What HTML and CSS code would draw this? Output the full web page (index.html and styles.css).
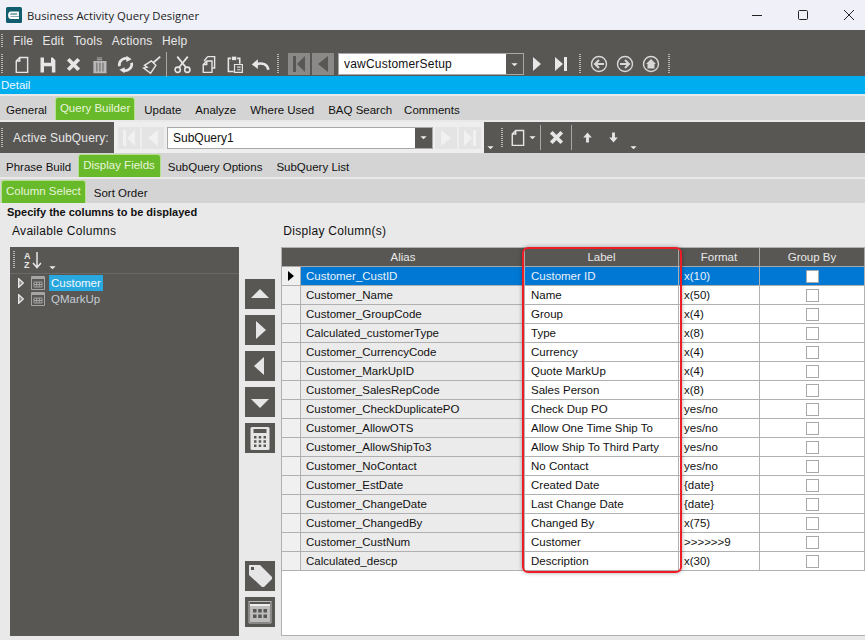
FILE: index.html
```html
<!DOCTYPE html>
<html>
<head>
  <meta charset="UTF-8">
  <title>Business Activity Query Designer</title>
  <link rel="stylesheet" href="styles.css">
</head>
<body>
  <svg class="defs" width="0" height="0">
    <symbol id="i-new" viewBox="0 0 24 24"><path d="M10 4h9v17H6V8z M10 4v4H6" fill="none" stroke="currentColor" stroke-width="1.600"/></symbol>
    <symbol id="i-x" viewBox="0 0 24 24"><path d="M6 6l12 12M18 6L6 18" fill="none" stroke="currentColor" stroke-width="4.400"/></symbol>
    <symbol id="i-table" viewBox="0 0 14 14"><path d="M.5.5h13v13H.5z" fill="none" stroke="currentColor"/><path d="M1 1h12v2H1z" fill="currentColor"/><path d="M3 6h8v5H3z M3 8.500h8M5.700 6v5M8.300 6v5" fill="none" stroke="currentColor"/></symbol>
    <symbol id="i-drop" viewBox="0 0 8 5"><path d="M.5 1h7L4 4.500z" fill="currentColor"/></symbol>
  </svg>

  <div class="titlebar">
    <svg class="logo" viewBox="0 0 16 16"><rect width="16" height="16" rx="1.500" fill="#0f5d6e"/><path d="M4 8.500h8V5.500H5C3.500 5.500 3 6.500 3 8s.5 3 2 3h8" fill="none" stroke="#fff" stroke-width="1.800"/></svg>
    <span class="title">Business Activity Query Designer</span>
    <div class="winctl">
      <svg viewBox="0 0 12 12"><path d="M1 6.500h10" stroke="#222" fill="none"/></svg>
      <svg viewBox="0 0 12 12"><rect x="1.500" y="1.500" width="9" height="9" rx="1" stroke="#222" fill="none"/></svg>
      <svg viewBox="0 0 12 12"><path d="M1 1l10 10M11 1L1 11" stroke="#222" fill="none"/></svg>
    </div>
  </div>

  <div class="darkbar">
    <div class="menu">
      <span class="grip"></span>
      <a>File</a><a>Edit</a><a>Tools</a><a>Actions</a><a>Help</a>
    </div>
    <div class="tools">
      <span class="grip tall"></span>
      <span class="ico"><svg><use href="#i-new"/></svg></span>
      <span class="ico"><svg viewBox="0 0 24 24"><path d="M4 4h14l3 3v14H4z M8 4v6h8V4 M8 14h9v7H8z" fill="#e6e6e6" fill-rule="evenodd"/></svg></span>
      <span class="ico"><svg><use href="#i-x"/></svg></span>
      <span class="ico dim"><svg viewBox="0 0 24 24"><path d="M9 4h6v3H9z M5 8h15v14H5z" fill="currentColor"/><path d="M9 10v10M12.500 10v10M16 10v10M7 5.500h11" stroke="#595754" fill="none"/></svg></span>
      <span class="ico"><svg viewBox="0 0 24 24"><path d="M5 14a7.500 7.500 0 0 1 10-8.500M19 10a7.500 7.500 0 0 1-10 8.500" fill="none" stroke="currentColor" stroke-width="3"/><path d="M13 2l6 4-6 3z M11 22l-6-4 6-3z" fill="currentColor"/></svg></span>
      <span class="ico"><svg viewBox="0 0 24 24"><path d="M22 3l-8 7" stroke="currentColor" stroke-width="2" fill="none"/><path d="M12 8l5 5-6 9-8-6 4-1-3-2z" fill="none" stroke="currentColor" stroke-width="1.600"/></svg></span>
      <span class="sep"></span>
      <span class="ico"><svg viewBox="0 0 24 24"><circle cx="6.500" cy="18" r="3" fill="none" stroke="currentColor" stroke-width="1.800"/><circle cx="17.500" cy="18" r="3" fill="none" stroke="currentColor" stroke-width="1.800"/><path d="M8 15.500L18 3M16 15.500L6 3" stroke="currentColor" stroke-width="2" fill="none"/></svg></span>
      <span class="ico"><svg viewBox="0 0 24 24"><path d="M11 3h8v13h-3 M11 3L7 8" fill="none" stroke="currentColor" stroke-width="1.600"/><path d="M10 8h6v13H6V12z M10 8v4H6" fill="none" stroke="currentColor" stroke-width="1.600"/></svg></span>
      <span class="ico"><svg viewBox="0 0 24 24"><path d="M11 20H5V5h3M15 5h3v6" fill="none" stroke="currentColor" stroke-width="1.800"/><path d="M9 3h5v4H9z" fill="currentColor"/><path d="M12 12h9v9h-9z M15 15h4M15 18h4" fill="none" stroke="currentColor" stroke-width="1.400"/></svg></span>
      <span class="ico"><svg viewBox="0 0 24 24"><path d="M21 18c-1-6-7-9-14-6" fill="none" stroke="currentColor" stroke-width="3"/><path d="M9 6v11L2 12z" fill="currentColor"/></svg></span>
      <span class="grip tall gap-l"></span>
      <span class="navbtn off"><svg viewBox="0 0 22 22"><path d="M5 3h3v16H5z M17 3v16L9 11z" fill="currentColor"/></svg></span>
      <span class="navbtn off"><svg viewBox="0 0 22 22"><path d="M16 3v16L6 11z" fill="currentColor"/></svg></span>
      <div class="combo main">
        <span class="val">vawCustomerSetup</span>
        <span class="dropbtn"><svg><use href="#i-drop"/></svg></span>
      </div>
      <span class="navbtn"><svg viewBox="0 0 22 22"><path d="M7 4v14l8-7z" fill="currentColor"/></svg></span>
      <span class="navbtn"><svg viewBox="0 0 22 22"><path d="M5 4v14l8-7z M14 4h3v14h-3z" fill="currentColor"/></svg></span>
      <span class="grip tall gap-m"></span>
      <span class="ico rnd"><svg viewBox="0 0 24 24"><circle cx="12" cy="12" r="7.500" fill="none" stroke="currentColor" stroke-width="1.400"/><path d="M17 12H9M12 8l-4 4 4 4" fill="none" stroke="currentColor" stroke-width="2"/></svg></span>
      <span class="ico rnd"><svg viewBox="0 0 24 24"><circle cx="12" cy="12" r="7.500" fill="none" stroke="currentColor" stroke-width="1.400"/><path d="M7 12h8M12 8l4 4-4 4" fill="none" stroke="currentColor" stroke-width="2"/></svg></span>
      <span class="ico rnd"><svg viewBox="0 0 24 24"><circle cx="12" cy="12" r="7.500" fill="none" stroke="currentColor" stroke-width="1.400"/><path d="M12 7l-5 5h1.500v4.500h7V12H17z" fill="currentColor"/></svg></span>
      <span class="grip tall gap-e"></span>
    </div>
  </div>

  <div class="detail">Detail</div>

  <div class="tabs top">
    <a>General</a><a class="on">Query Builder</a><a>Update</a><a>Analyze</a><a>Where Used</a><a class="tight">BAQ Search</a><a>Comments</a>
  </div>

  <div class="subbar">
    <div class="sub-left"><span class="grip tall"></span><span>Active SubQuery:</span></div>
    <div class="sub-nav">
      <span class="navbtn pale"><svg viewBox="0 0 22 22"><path d="M5 3h3v16H5z M17 3v16L9 11z" fill="currentColor"/></svg></span>
      <span class="navbtn pale"><svg viewBox="0 0 22 22"><path d="M16 3v16L6 11z" fill="currentColor"/></svg></span>
      <div class="combo sub">
        <span class="val">SubQuery1</span>
        <span class="dropbtn"><svg><use href="#i-drop"/></svg></span>
      </div>
      <span class="navbtn pale"><svg viewBox="0 0 22 22"><path d="M6 3v16l10-8z" fill="currentColor"/></svg></span>
      <span class="navbtn pale"><svg viewBox="0 0 22 22"><path d="M5 3v16l8-8z M14 3h3v16h-3z" fill="currentColor"/></svg></span>
    </div>
    <div class="sub-tools">
      <svg class="chev"><use href="#i-drop"/></svg>
      <span class="grip tall"></span>
      <span class="ico narrow"><svg><use href="#i-new"/></svg></span>
      <svg class="chev mid"><use href="#i-drop"/></svg>
      <span class="sep"></span>
      <span class="ico"><svg><use href="#i-x"/></svg></span>
      <span class="sep"></span>
      <span class="ico small"><svg viewBox="0 0 24 24"><path d="M12 5l6 7h-4v7h-4v-7H6z" fill="currentColor"/></svg></span>
      <span class="ico small"><svg viewBox="0 0 24 24"><path d="M12 19l6-7h-4V5h-4v7H6z" fill="currentColor"/></svg></span>
      <svg class="chev end"><use href="#i-drop"/></svg>
    </div>
  </div>

  <div class="tabs second">
    <a>Phrase Build</a><a class="on">Display Fields</a><a>SubQuery Options</a><a>SubQuery List</a>
  </div>

  <div class="tabs third">
    <a class="on">Column Select</a><a>Sort Order</a>
  </div>

  <div class="content">
    <div class="hint">Specify the columns to be displayed</div>
    <div class="captions">
      <span class="cap-left">Available Columns</span>
      <span class="cap-right">Display Column(s)</span>
    </div>
    <div class="panes">
      <div class="treepane">
        <div class="tree-tools">
          <span class="grip"></span>
          <svg class="az" viewBox="0 0 20 18"><text x="0" y="8" class="az-t">A</text><text x="0" y="17" class="az-t">Z</text><path d="M13 1v15M9 12l4 4.500 4-4.500" fill="none" stroke="currentColor" stroke-width="1.500"/></svg>
          <svg class="chev"><use href="#i-drop"/></svg>
        </div>
        <div class="tree">
          <div class="node">
            <svg class="tw" viewBox="0 0 6 10"><path d="M.7.800L5.300 5 .7 9.200z" fill="#8a8987" stroke="#e6e6e6" stroke-width="1.400"/></svg>
            <svg class="tbl"><use href="#i-table"/></svg>
            <span class="nm sel">Customer</span>
          </div>
          <div class="node">
            <svg class="tw" viewBox="0 0 6 10"><path d="M.7.800L5.300 5 .7 9.200z" fill="#8a8987" stroke="#e6e6e6" stroke-width="1.400"/></svg>
            <svg class="tbl"><use href="#i-table"/></svg>
            <span class="nm">QMarkUp</span>
          </div>
        </div>
      </div>

      <div class="movers">
        <span class="mv"><svg viewBox="0 0 30 30"><path d="M15 10l9 9H6z" fill="currentColor"/></svg></span>
        <span class="mv"><svg viewBox="0 0 30 30"><path d="M11 6l10 9-10 9z" fill="currentColor"/></svg></span>
        <span class="mv"><svg viewBox="0 0 30 30"><path d="M19 6L9 15l10 9z" fill="currentColor"/></svg></span>
        <span class="mv"><svg viewBox="0 0 30 30"><path d="M15 21l9-9H6z" fill="currentColor"/></svg></span>
        <span class="mv"><svg viewBox="0 0 30 30"><path d="M7 4h16a1.500 1.500 0 0 1 1.500 1.500v20A1.500 1.500 0 0 1 23 27H7a1.500 1.500 0 0 1-1.500-1.500v-20A1.500 1.500 0 0 1 7 4z" fill="currentColor"/><path d="M8.500 6h13v4h-13z" fill="#595754"/><path d="M9 13h2.500v2.500H9z M13.700 13h2.500v2.500h-2.500z M18.500 13H21v2.500h-2.500z M9 17.300h2.500v2.500H9z M13.700 17.300h2.500v2.500h-2.500z M18.500 17.300H21v2.500h-2.500z M9 21.600h2.500v2.500H9z M13.700 21.600h2.500v2.500h-2.500z M18.500 21.600H21v2.500h-2.500z" fill="#595754"/></svg></span>
        <span class="spacer"></span>
        <span class="mv"><svg viewBox="0 0 30 30"><path d="M4 4h11l12 12v2l-8 8h-2L4 14z" fill="currentColor"/><path d="M6 6h3v3H6z" fill="#595754"/></svg></span>
        <span class="mv"><svg viewBox="0 0 30 30"><path d="M4 4.500h22M4 4v22h22V4" fill="none" stroke="#bbb"/><path d="M5 8h20v17H5z" fill="#bdbdbd"/><path d="M5 7h20v2H5z" fill="#eee"/><path d="M8 12h3.500v3.500H8z M13.200 12h3.500v3.500h-3.500z M18.500 12H22v3.500h-3.500z M8 17.500h3.500V21H8z M13.200 17.500h3.500V21h-3.500z M18.500 17.500H22V21h-3.500z" fill="#595754"/></svg></span>
      </div>

      <div class="gridbox">
        <table class="grid">
          <colgroup><col class="c0"><col class="c1"><col class="c2"><col class="c3"><col class="c4"></colgroup>
          <thead>
            <tr><th colspan="2">Alias</th><th>Label</th><th>Format</th><th>Group By</th></tr>
          </thead>
          <tbody>
            <tr class="cur"><td class="rh"><svg class="rowmark" viewBox="0 0 6 10"><path d="M0 0l6 5-6 5z"/></svg></td><td class="al">Customer_CustID</td><td class="lb">Customer ID</td><td>x(10)</td><td class="ck"><span class="box"></span></td></tr>
            <tr><td class="rh"></td><td class="al">Customer_Name</td><td class="lb">Name</td><td>x(50)</td><td class="ck"><span class="box"></span></td></tr>
            <tr><td class="rh"></td><td class="al">Customer_GroupCode</td><td class="lb">Group</td><td>x(4)</td><td class="ck"><span class="box"></span></td></tr>
            <tr><td class="rh"></td><td class="al">Calculated_customerType</td><td class="lb">Type</td><td>x(8)</td><td class="ck"><span class="box"></span></td></tr>
            <tr><td class="rh"></td><td class="al">Customer_CurrencyCode</td><td class="lb">Currency</td><td>x(4)</td><td class="ck"><span class="box"></span></td></tr>
            <tr><td class="rh"></td><td class="al">Customer_MarkUpID</td><td class="lb">Quote MarkUp</td><td>x(4)</td><td class="ck"><span class="box"></span></td></tr>
            <tr><td class="rh"></td><td class="al">Customer_SalesRepCode</td><td class="lb">Sales Person</td><td>x(8)</td><td class="ck"><span class="box"></span></td></tr>
            <tr><td class="rh"></td><td class="al">Customer_CheckDuplicatePO</td><td class="lb">Check Dup PO</td><td>yes/no</td><td class="ck"><span class="box"></span></td></tr>
            <tr><td class="rh"></td><td class="al">Customer_AllowOTS</td><td class="lb">Allow One Time Ship To</td><td>yes/no</td><td class="ck"><span class="box"></span></td></tr>
            <tr><td class="rh"></td><td class="al">Customer_AllowShipTo3</td><td class="lb">Allow Ship To Third Party</td><td>yes/no</td><td class="ck"><span class="box"></span></td></tr>
            <tr><td class="rh"></td><td class="al">Customer_NoContact</td><td class="lb">No Contact</td><td>yes/no</td><td class="ck"><span class="box"></span></td></tr>
            <tr><td class="rh"></td><td class="al">Customer_EstDate</td><td class="lb">Created Date</td><td>{date}</td><td class="ck"><span class="box"></span></td></tr>
            <tr><td class="rh"></td><td class="al">Customer_ChangeDate</td><td class="lb">Last Change Date</td><td>{date}</td><td class="ck"><span class="box"></span></td></tr>
            <tr><td class="rh"></td><td class="al">Customer_ChangedBy</td><td class="lb">Changed By</td><td>x(75)</td><td class="ck"><span class="box"></span></td></tr>
            <tr><td class="rh"></td><td class="al">Customer_CustNum</td><td class="lb">Customer</td><td>&gt;&gt;&gt;&gt;&gt;&gt;9</td><td class="ck"><span class="box"></span></td></tr>
            <tr><td class="rh"></td><td class="al">Calculated_descp</td><td class="lb">Description</td><td>x(30)</td><td class="ck"><span class="box"></span></td></tr>
          </tbody>
        </table>
        <div class="redbox"></div>
      </div>
    </div>
  </div>
</body>
</html>
```

FILE: styles.css
```css
/* page */
html, body {
  margin: 0;
  padding: 0;
}

body {
  width: 865px;
  height: 640px;
  overflow: hidden;
  background-color: #e9e9e9;
  font-family: "Liberation Sans", Arial, sans-serif;
  font-size: 11.5px;
  color: #111;
}

.defs {
  position: absolute;
}

/* window title */
.titlebar {
  height: 30px;
  display: flex;
  align-items: center;
  background-color: #f0f1f8;
  padding-left: 6px;
}

.logo {
  width: 16px;
  height: 16px;
  margin-right: 5px;
}

.title {
  font-family: "Open Sans", sans-serif;
  font-size: 11.3px;
  color: #222;
}

.winctl {
  margin-left: auto;
  display: flex;
  gap: 34px;
  padding-right: 10px;
}

.winctl svg {
  width: 12px;
  height: 12px;
}

/* menu and main toolbar */
.darkbar {
  height: 46px;
  background-color: #595754;
  color: #e8e8e8;
}

.menu {
  height: 22px;
  display: flex;
  align-items: center;
  font-size: 12px;
  letter-spacing: 0.2px;
  padding-left: 1px;
}

.menu .grip {
  height: 14px;
  margin-right: 10px;
}

.menu a {
  margin-right: 9.4px;
}

.tools {
  height: 24px;
  display: flex;
  align-items: center;
  padding-left: 1px;
}

.grip {
  display: inline-block;
  flex: none;
  width: 2px;
  height: 18px;
  background: repeating-linear-gradient(to bottom, #b5b5b5 0 1px, transparent 1px 2px);
}

.grip.tall {
  height: 20px;
  margin-right: 5px;
}

.grip.gap-l {
  margin-left: 4px;
  margin-right: 9px;
}

.grip.gap-m {
  margin-left: 5px;
  margin-right: 5px;
}

.grip.gap-e {
  margin-left: 4px;
}

.ico {
  flex: none;
  width: 26px;
  height: 24px;
  display: flex;
  align-items: center;
  justify-content: center;
  color: #e6e6e6;
}

.ico svg {
  width: 21px;
  height: 21px;
}

.ico.dim {
  color: #b8b8b8;
}

.ico.rnd {
  color: #d8d8d8;
}

.ico.rnd svg {
  width: 24px;
  height: 24px;
}

.ico.narrow {
  width: 24px;
}

.ico.small svg {
  width: 17px;
  height: 17px;
}

.sep {
  flex: none;
  width: 1px;
  height: 25px;
  background-color: #a8a8a8;
  margin: 0 2px;
}

.navbtn {
  flex: none;
  width: 22px;
  height: 22px;
  margin-right: 2px;
  color: #e8e8e8;
}

.navbtn svg {
  display: block;
  width: 22px;
  height: 22px;
}

.navbtn.off {
  background-color: #8a8987;
  color: #595754;
}

.navbtn.pale {
  background-color: #e4e4e4;
  color: #f1f1f1;
}

.combo {
  display: flex;
  align-items: stretch;
  height: 22px;
  box-sizing: border-box;
  border: 1px solid #a8a8a8;
  background-color: #fff;
  font-size: 12px;
  color: #111;
}

.combo .val {
  flex: 1;
  line-height: 20px;
  padding-left: 5px;
}

.dropbtn {
  width: 17px;
  background-color: #595754;
  color: #eee;
  display: flex;
  align-items: center;
  justify-content: center;
}

.dropbtn svg {
  width: 7px;
  height: 5px;
}

.combo.main {
  width: 186px;
  margin: 0 2px 0 2px;
  letter-spacing: 0.2px;
}

.combo.sub {
  width: 266px;
  margin: 0 2px 0 1px;
}

/* blue strip */
.detail {
  height: 18px;
  line-height: 18px;
  background-color: #00adef;
  color: #f0f8ff;
  padding-left: 1px;
  margin-bottom: 2px;
}

/* tab strips */
.tabs {
  height: 24px;
  display: flex;
  align-items: flex-end;
  background-color: #d4d4d4;
  margin-bottom: 2px;
  padding-left: 6px;
}

.tabs a {
  line-height: 19px;
  margin-right: 14px;
}

.tabs a.tight {
  margin-right: 12px;
}

.tabs a.on {
  line-height: 21px;
  height: 23px;
  box-sizing: border-box;
  padding: 0 4px;
  margin-left: -6px;
  margin-right: 9px;
  background-color: #69ba2a;
  color: #e8f5dc;
  border: 1px solid #b5e08c;
  border-bottom: none;
  border-radius: 3px 3px 0 0;
}

.tabs.second a.on {
  margin-left: -7px;
  margin-right: 7px;
  padding-right: 5px;
}

.tabs.third {
  margin-bottom: 3px;
}

.tabs.third a.on {
  margin-left: -5px;
  margin-right: 8px;
}

/* subquery toolbar */
.subbar {
  height: 31px;
  display: flex;
  background-color: #595754;
  color: #e8e8e8;
  margin-top: -2px;
  border-top: 2px solid #e9e9e9;
}

.sub-left {
  flex: none;
  width: 113px;
  display: flex;
  align-items: center;
  padding-left: 1px;
  font-size: 12px;
  letter-spacing: 0.15px;
}

.sub-left .grip {
  margin-right: 10px;
}

.sub-nav {
  flex: none;
  width: 366px;
  display: flex;
  align-items: center;
  padding-left: 4px;
  background-color: #eeeeee;
}

.sub-tools {
  display: flex;
  align-items: center;
}

.sub-tools .grip.tall {
  margin-right: 2px;
}

.chev {
  flex: none;
  width: 7px;
  height: 5px;
  color: #eee;
  align-self: flex-end;
  margin-bottom: 3px;
}

.sub-tools .chev {
  margin-left: 3px;
  margin-right: 7px;
}

.sub-tools .chev.mid {
  align-self: center;
  margin: 0 2px 0 0;
}

.sub-tools .chev.end {
  margin-left: 4px;
}

/* content */
.content {
  height: 434px;
  padding-left: 7px;
}

.hint {
  font-weight: bold;
  font-size: 11px;
  line-height: 13px;
  color: #111;
}

.captions {
  display: flex;
  font-size: 12px;
  letter-spacing: 0.3px;
  height: 28px;
  line-height: 25px;
  padding-left: 5px;
}

.cap-right {
  margin-left: 167px;
}

.panes {
  display: flex;
  margin-left: 3px;
  height: 389px;
}

.treepane {
  flex: none;
  width: 229px;
  background-color: #595754;
  color: #d8d8d8;
}

.tree-tools {
  height: 27px;
  display: flex;
  align-items: center;
  padding-left: 3px;
  border-bottom: 1px solid #6a6866;
  box-sizing: border-box;
}

.az {
  width: 20px;
  height: 18px;
  margin-left: 9px;
  margin-right: 5px;
  color: #e6e6e6;
}

.az-t {
  font-size: 9px;
  font-weight: bold;
  fill: #e6e6e6;
}

.tree {
  padding-top: 1px;
}

.node {
  height: 16px;
  display: flex;
  align-items: center;
}

.tw {
  width: 6px;
  height: 10px;
  margin-left: 8px;
  margin-right: 7px;
}

.tbl {
  width: 14px;
  height: 14px;
  color: #a5a5a5;
  margin-right: 4px;
}

.nm {
  padding: 0 2px;
  line-height: 16px;
  color: #c4ccd4;
}

.nm.sel {
  background-color: #29a8e0;
  color: #f4f8fb;
}

.movers {
  flex: none;
  width: 42px;
  display: flex;
  flex-direction: column;
  gap: 6px;
  padding: 32px 0 9px 6px;
  box-sizing: border-box;
}

.mv {
  flex: none;
  width: 30px;
  height: 30px;
  background-color: #595754;
  color: #e6e6e6;
}

.mv svg {
  display: block;
  width: 30px;
  height: 30px;
}

.spacer {
  flex: 1;
}

/* display columns grid */
.gridbox {
  position: relative;
  flex: none;
  width: 584px;
  box-sizing: border-box;
  height: 389px;
  background-color: #fff;
  border: 1px solid #b0b0b0;
  border-right: none;
}

.grid {
  border-collapse: separate;
  border-spacing: 0;
  table-layout: fixed;
  width: 583px;
}

.c0 { width: 19px; }
.c1 { width: 224px; }
.c2 { width: 154px; }
.c3 { width: 81px; }
.c4 { width: 105px; }

.grid th {
  height: 19px;
  box-sizing: border-box;
  padding: 0;
  background-color: #595754;
  color: #e8e8e8;
  font-weight: normal;
  text-align: center;
  border-right: 1px solid #a8a8a8;
  border-bottom: 1px solid #a8a8a8;
}

.grid td {
  height: 19px;
  box-sizing: border-box;
  padding: 0 0 0 5px;
  background-color: #fff;
  white-space: nowrap;
  overflow: hidden;
  border-right: 1px solid #b0b0b0;
  border-bottom: 1px solid #b0b0b0;
}

.grid td.lb {
  padding-left: 6px;
}

.grid td.rh {
  padding: 0 0 0 6px;
  background-color: #f0f0f0;
}

.grid td.al {
  background-color: #ebebeb;
}

.grid td.ck {
  padding: 0;
  text-align: center;
  line-height: 0;
}

.box {
  display: inline-block;
  width: 11px;
  height: 11px;
  background-color: #fff;
  border: 1px solid #a8a8a8;
}

.rowmark {
  display: block;
  width: 6px;
  height: 10px;
}

.grid tr.cur td {
  background-color: #0078d4;
  color: #eaf3fb;
}

.grid tr.cur td.rh {
  background-color: #f0f0f0;
}

/* annotation over the label column */
.redbox {
  position: absolute;
  left: 240px;
  top: -1px;
  width: 156px;
  height: 322px;
  border: 2px solid #ee1c25;
  border-radius: 6px;
  box-shadow: 0 0 4px rgba(0, 0, 0, 0.35);
}
```
